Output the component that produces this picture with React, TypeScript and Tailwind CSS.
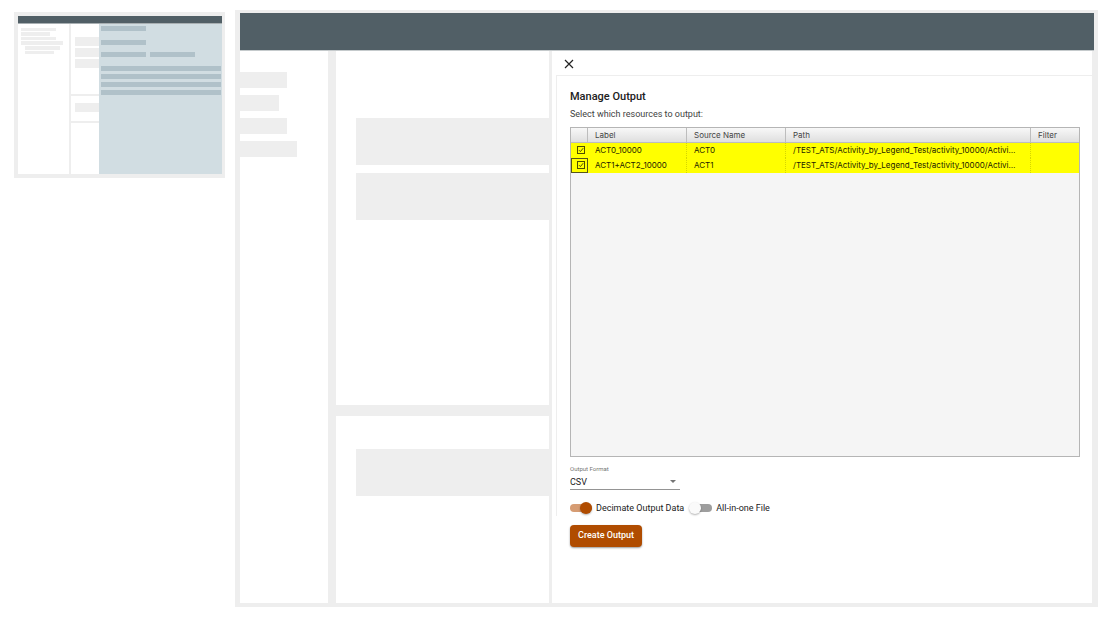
import { useState } from 'react';

const resources = [
  { label: 'ACT0_10000', source: 'ACT0', path: '/TEST_ATS/Activity_by_Legend_Test/activity_10000/Activi…' },
  { label: 'ACT1+ACT2_10000', source: 'ACT1', path: '/TEST_ATS/Activity_by_Legend_Test/activity_10000/Activi…' },
];

function Overview() {
  return (
    <aside aria-hidden="true" className="mt-0.5 flex h-[166px] w-[211px] shrink-0 flex-col border-4 border-r-[3px] border-[#eeeeee] bg-white">
      <div className="h-2 shrink-0 border-b border-[#a8afb2] bg-[#515f66]" />
      <div className="flex grow">
        <div className="flex w-[51px] shrink-0 flex-col gap-px pl-[3px] pt-1">
          <div className="h-[3px] w-[35px] bg-[#eeeeee]" />
          <div className="h-1 w-[29px] bg-[#eeeeee]" />
          <div className="h-[3px] w-[35px] bg-[#eeeeee]" />
          <div className="h-1 w-[42px] bg-[#eeeeee]" />
          <div className="ml-1 h-1 w-[35px] bg-[#eeeeee]" />
          <div className="ml-1 h-[3px] w-[29px] bg-[#eeeeee]" />
        </div>
        <div className="w-0.5 shrink-0 bg-[#eeeeee]" />
        <div className="flex w-7 shrink-0 flex-col">
          <div className="flex flex-col gap-0.5 pb-[26px] pl-1 pt-[13px]">
            <div className="h-[9px] bg-[#eeeeee]" />
            <div className="h-[9px] bg-[#eeeeee]" />
            <div className="h-[9px] bg-[#eeeeee]" />
          </div>
          <div className="h-0.5 bg-[#eeeeee]" />
          <div className="pb-[9px] pl-1 pt-[7px]">
            <div className="h-[9px] bg-[#eeeeee]" />
          </div>
          <div className="h-0.5 bg-[#eeeeee]" />
        </div>
        <div className="flex grow flex-col bg-[#d1dde2] pl-0.5 pr-px pt-0.5">
          <div className="h-[5px] w-[45px] bg-[#b0c1c9]" />
          <div className="mt-[9px] h-[5px] w-[45px] bg-[#b0c1c9]" />
          <div className="mt-[7px] flex gap-1">
            <div className="h-[5px] w-[45px] bg-[#b0c1c9]" />
            <div className="h-[5px] w-[45px] bg-[#b0c1c9]" />
          </div>
          <div className="mt-[9px] flex flex-col gap-[3px]">
            <div className="h-[5px] bg-[#b0c1c9]" />
            <div className="h-[5px] bg-[#b0c1c9]" />
            <div className="h-[5px] bg-[#b0c1c9]" />
            <div className="h-[5px] bg-[#b0c1c9]" />
          </div>
        </div>
      </div>
    </aside>
  );
}

function ResourceTable() {
  const [checked, setChecked] = useState([true, true]);
  return (
    <div className="mt-[7px] h-[330px] border border-[#b5b5b5] bg-[#f5f5f5]">
      <table className="w-full table-fixed border-separate border-spacing-0 font-[Inter,Arial,sans-serif] text-[8px]">
        <colgroup>
          <col className="w-[17px]" />
          <col className="w-[99px]" />
          <col className="w-[99px]" />
          <col />
          <col className="w-[48px]" />
        </colgroup>
        <thead>
          <tr className="bg-linear-to-b from-[#f8f8f8] to-[#dddddd] text-left leading-[14px] text-[#444444]">
            <th aria-label="Selected" className="border-b border-r border-[#bdbdbd] p-0" />
            <th className="border-b border-r border-[#bdbdbd] py-0 pl-[7px] font-normal">Label</th>
            <th className="border-b border-r border-[#bdbdbd] py-0 pl-[7px] font-normal">Source Name</th>
            <th className="border-b border-r border-[#bdbdbd] py-0 pl-[7px] font-normal">Path</th>
            <th className="border-b border-[#bdbdbd] py-0 pl-[7px] font-normal">Filter</th>
          </tr>
        </thead>
        <tbody>
          {resources.map((r, i) => (
            <tr key={r.label} className="whitespace-nowrap bg-[#ffff00] leading-[15px] text-[#222200]">
              <td className={i === 1 ? 'p-0 outline outline-1 -outline-offset-1 outline-[#55551a]' : 'p-0'}>
                <span className="relative flex h-[15px] items-center justify-end pb-0.5 pr-[3px]">
                  <input
                    type="checkbox"
                    aria-label={r.label}
                    checked={checked[i]}
                    onChange={() => setChecked(checked.map((c, j) => (j === i ? !c : c)))}
                    className="peer size-2 appearance-none border border-[#4d4d00]"
                  />
                  <svg viewBox="0 0 8 8" className="pointer-events-none absolute right-[3px] hidden size-2 peer-checked:block" fill="none" stroke="#4d4d00">
                    <path d="M2 4.2 3.4 5.6 6.2 2.2" />
                  </svg>
                </span>
              </td>
              <td className="border-r border-dotted border-[#d6d600] py-0 pl-[7px]">{r.label}</td>
              <td className="border-r border-dotted border-[#d6d600] py-0 pl-[7px]">{r.source}</td>
              <td className="border-r border-dotted border-[#d6d600] py-0 pl-[7px]">{r.path}</td>
              <td className="p-0" />
            </tr>
          ))}
        </tbody>
      </table>
    </div>
  );
}

function Toggle({ label, initial }: { label: string; initial: boolean }) {
  const [on, setOn] = useState(initial);
  return (
    <label className="flex items-center gap-1 text-[9px] leading-3">
      <span className="relative flex h-3 w-[22px] items-center">
        <input type="checkbox" role="switch" checked={on} onChange={() => setOn(!on)} className="peer h-2 w-[22px] appearance-none rounded-full bg-[#9e9e9e] checked:bg-[#d69c73]" />
        <span className="pointer-events-none absolute -left-px size-3 rounded-full bg-[#fafafa] shadow-[0_1px_2px_rgba(0,0,0,0.3)] peer-checked:left-2.5 peer-checked:bg-[#b04c00]" />
      </span>
      {label}
    </label>
  );
}

function OutputPanel() {
  return (
    <section className="flex min-w-0 grow flex-col bg-white text-[#212121]">
      <div className="flex h-6 shrink-0 items-center pl-3 pt-0.5">
        <button type="button" aria-label="Close" className="size-2.5">
          <svg viewBox="0 0 10 10" className="size-2.5" fill="none" stroke="#222" strokeWidth="1.2">
            <path d="M1 1 9 9M9 1 1 9" />
          </svg>
        </button>
      </div>
      <div className="ml-1 border-l border-t border-[#eeeeee] pl-[13px] pr-3 pt-3.5">
        <h1 className="text-[11px] font-medium leading-[14px]">Manage Output</h1>
        <p className="mt-1 text-[9px] leading-3 text-[#424242]">Select which resources to output:</p>
        <ResourceTable />
        <div className="mt-[7px] flex w-[110px] flex-col">
          <label htmlFor="format" className="text-[6px] leading-[10px] text-[#757575]">Output Format</label>
          <span className="relative flex">
            <select id="format" className="h-4 w-full appearance-none border-b border-[#949494] bg-transparent text-[9px] leading-[14px]">
              <option>CSV</option>
            </select>
            <svg viewBox="0 0 6 3" className="pointer-events-none absolute right-1 top-1.5 h-[3px] w-1.5" fill="#757575">
              <path d="M0 0H6L3 3Z" />
            </svg>
          </span>
        </div>
        <div className="flex gap-1.5 pb-0.5 pt-3">
          <Toggle label="Decimate Output Data" initial={true} />
          <Toggle label="All-in-one File" initial={false} />
        </div>
      </div>
      <button type="button" className="ml-[18px] mt-[9px] h-[22px] w-[72px] shrink-0 rounded-sm bg-[#b04c00] text-[9px] font-medium text-white shadow-[0_1px_2px_rgba(0,0,0,0.4)]">
        Create Output
      </button>
    </section>
  );
}

export default function App() {
  return (
    <div className="flex min-h-screen items-stretch gap-2.5 bg-white pb-3.5 pl-3.5 pr-[21px] pt-2.5 font-[Roboto,sans-serif]">
      <Overview />
      <main className="flex min-w-0 grow flex-col border-4 border-t-[3px] border-l-[5px] border-[#eeeeee] bg-white">
        <header className="h-[38px] shrink-0 border-b border-[#c5cacc] bg-[#515f66]" />
        <div className="mr-0.5 flex grow shadow-[2px_0_0_#eeeeee]">
          <div className="flex w-[88px] shrink-0 flex-col gap-[7px] pt-[21px]">
            <div className="h-4 w-[47px] bg-[#eeeeee]" />
            <div className="h-4 w-[39px] bg-[#eeeeee]" />
            <div className="h-4 w-[47px] bg-[#eeeeee]" />
            <div className="h-4 w-[57px] bg-[#eeeeee]" />
          </div>
          <div className="w-2 shrink-0 bg-[#eeeeee]" />
          <div className="flex w-[213px] shrink-0 flex-col">
            <div className="flex h-[354px] flex-col gap-2 pl-5 pt-[67px]">
              <div className="h-[47px] bg-[#eeeeee]" />
              <div className="h-[47px] bg-[#eeeeee]" />
            </div>
            <div className="h-[11px] bg-[#eeeeee]" />
            <div className="pl-5 pt-[33px]">
              <div className="h-[47px] bg-[#eeeeee]" />
            </div>
          </div>
          <div className="w-[3px] shrink-0 bg-[#eeeeee]" />
          <OutputPanel />
        </div>
      </main>
    </div>
  );
}
